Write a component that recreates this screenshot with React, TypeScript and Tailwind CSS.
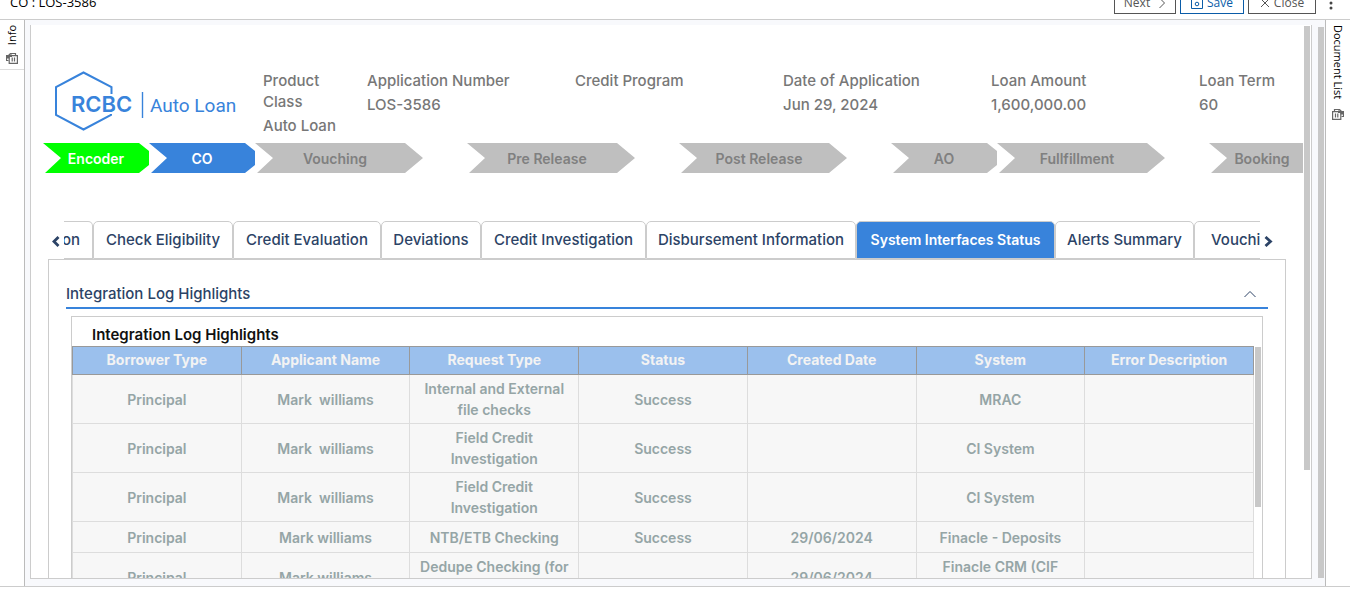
import React from "react";

const facts = [
  { label: "Product Class", value: "Auto Loan", width: "w-[104px] pr-6" },
  { label: "Application Number", value: "LOS-3586", width: "w-52" },
  { label: "Credit Program", value: "", width: "w-52" },
  { label: "Date of Application", value: "Jun 29, 2024", width: "w-52" },
  { label: "Loan Amount", value: "1,600,000.00", width: "w-52" },
  { label: "Loan Term", value: "60", width: "w-52" },
];

const stages = [
  { name: "Encoder", wide: false, tone: "bg-[#00ff00] text-white" },
  { name: "CO", wide: false, tone: "bg-[#3883db] text-white" },
  { name: "Vouching", wide: true, tone: "bg-[#bfbfbf] text-[#808080]" },
  { name: "Pre Release", wide: true, tone: "bg-[#bfbfbf] text-[#808080]" },
  { name: "Post Release", wide: true, tone: "bg-[#bfbfbf] text-[#808080]" },
  { name: "AO", wide: false, tone: "bg-[#bfbfbf] text-[#808080]" },
  { name: "Fullfillment", wide: true, tone: "bg-[#bfbfbf] text-[#808080]" },
  { name: "Booking", wide: false, tone: "bg-[#bfbfbf] text-[#808080]" },
];

const tabs = [
  { name: "on", width: "w-[29px] justify-end pr-3 rounded-tl-none border-l-0" },
  { name: "Check Eligibility", width: "w-[140px] justify-center" },
  { name: "Credit Evaluation", width: "w-[148px] justify-center" },
  { name: "Deviations", width: "w-[100px] justify-center" },
  { name: "Credit Investigation", width: "w-[165px] justify-center" },
  { name: "Disbursement Information", width: "w-[210px] justify-center" },
  { name: "System Interfaces Status", width: "w-[199px] justify-center", active: true },
  { name: "Alerts Summary", width: "w-[139px] justify-center" },
  { name: "Vouching", width: "w-[104px] justify-start pl-4" },
];

const columns = ["Borrower Type", "Applicant Name", "Request Type", "Status", "Created Date", "System", "Error Description"];

const rows = [
  ["Principal", "Mark  williams", "Internal and External file checks", "Success", "", "MRAC", ""],
  ["Principal", "Mark  williams", "Field Credit Investigation", "Success", "", "CI System", ""],
  ["Principal", "Mark  williams", "Field Credit Investigation", "Success", "", "CI System", ""],
  ["Principal", "Mark williams", "NTB/ETB Checking", "Success", "29/06/2024", "Finacle - Deposits", ""],
  ["Principal", "Mark williams", "Dedupe Checking (for Individual)", "", "29/06/2024", "Finacle CRM (CIF Inquiry)", ""],
];

function CardsIcon({ className = "" }: { className?: string }) {
  return (
    <svg className={className} width="12" height="11" viewBox="0 0 12 11" fill="none" stroke="#666" strokeWidth="1.2" aria-hidden="true">
      <path d="M2.5 2.5v-2h5l2 2h2v5H9.5" />
      <path d="M.6 2.6h8.2v7.8H.6z" />
      <path d="M3.5 4.5v4M5.8 4.5v4" />
      <path d="M6 1.5h2V3h3v2.5H8.5V4H6z" fill="#666" stroke="none" />
    </svg>
  );
}

function Logo() {
  return (
    <svg className="block" width="186" height="61" viewBox="0 0 186 61" role="img" aria-label="RCBC Auto Loan">
      <path d="M56.5 24V17L28.5 2.5 1 17v28l27.5 14.5L56 45v-1" fill="none" stroke="#3883db" strokeWidth="2" />
      <text x="16" y="42" fill="#3883db" className="font-['Inter',sans-serif] text-[22px] font-semibold">RCBC</text>
      <path d="M87.5 22v26" stroke="#3883db" strokeWidth="1.4" />
      <text x="95" y="42" fill="#3883db" className="font-['Roboto',sans-serif] text-[19px] font-normal">Auto Loan</text>
    </svg>
  );
}

const headerButton = "flex h-8 items-center justify-center gap-1 border bg-white text-[12px] leading-4";

export default function App() {
  return (
    <div className="flex h-screen flex-col overflow-hidden bg-white pb-[15px] font-['Inter',sans-serif] text-[14px]">
      <header className="flex h-5 shrink-0 items-end overflow-hidden border-b border-[#ccc] pb-[5px] pl-[10px] pr-[17px] font-['Open_Sans',sans-serif]">
        <h1 className="flex-1 pb-[5px] text-[13px] leading-[14px] text-black">CO : LOS-3586</h1>
        <div className="flex items-end gap-1">
          <button className={headerButton + " w-[62px] border-[#555] pb-0.5 pt-3 text-[#555]"}>
            Next
            <svg className="ml-1" width="8" height="12" viewBox="0 0 8 12" fill="none" stroke="currentColor"><path d="M1.5 1l5 5-5 5" /></svg>
          </button>
          <button className={headerButton + " w-16 border-[#0a5ca8] pb-0.5 pt-3 text-[#0a5ca8]"}>
            <svg width="12" height="12" viewBox="0 0 12 12" fill="none" stroke="currentColor"><path d="M.5.5h11v11H.5zM3 2.5h6" /><circle cx="6" cy="7" r="1.8" /></svg>
            Save
          </button>
          <button className={headerButton + " w-[68px] border-[#555] pb-0.5 pt-3 text-[#555]"}>
            <svg width="10" height="10" viewBox="0 0 10 10" fill="none" stroke="currentColor"><path d="M1 1l8 8M9 1L1 9" /></svg>
            Close
          </button>
          <button aria-label="More" className="flex h-8 w-[13px] items-end justify-end pb-1">
            <svg width="4" height="14" viewBox="0 0 4 14" fill="#444"><circle cx="2" cy="2" r="1.5" /><circle cx="2" cy="7" r="1.5" /><circle cx="2" cy="12" r="1.5" /></svg>
          </button>
        </div>
      </header>

      <div className="flex min-h-0 flex-1 border-b border-[#ccc]">
        <aside className="w-[25px] shrink-0 border-r border-[#bbb] font-['Open_Sans',sans-serif] text-[11px] leading-4 text-black">
          <button className="flex h-[50px] w-full flex-col items-center gap-2 border-b border-[#ddd] pt-[5px]">
            <span className="rotate-180 [writing-mode:vertical-rl]">Info</span>
            <CardsIcon className="-scale-x-100" />
          </button>
        </aside>

        <main className="flex min-w-0 flex-1 bg-[#f8f9fc] pb-[7px] pl-[5px] pt-[5px]">
          <div className="flex min-w-0 flex-1 overflow-hidden border-x border-b border-[#ccc] bg-white">
            <div className="min-w-0 flex-1 overflow-hidden">
              <div className="flex w-max pl-6 pt-[45px] text-[15px] font-medium text-[#777]">
                <div className="w-[208px]"><Logo /></div>
                <dl className="flex">
                  {facts.map((f) => (
                    <div key={f.label} className={f.width}>
                      <dt className="leading-[21px]">{f.label}</dt>
                      <dd className="mt-[3px] whitespace-nowrap leading-[21px]">
                        <span>{f.value}</span>
                      </dd>
                    </div>
                  ))}
                </dl>
              </div>

              <ol className="mt-[7px] flex w-max pl-3 font-semibold">
                {stages.map((s) => (
                  <li key={s.name} className={s.wide ? "w-[212px]" : "w-[106px]"}>
                    <div
                      className={
                        (s.wide
                          ? "w-[168px] pr-2 [clip-path:polygon(0_0,150px_0,100%_50%,150px_100%,2px_100%,18px_50%)] "
                          : s.name === "Booking"
                            ? "w-[106px] [clip-path:polygon(0_0,100%_0,100%_100%,2px_100%,18px_50%)] "
                            : "w-[106px] [clip-path:polygon(0_0,96px_0,100%_8px,100%_22px,96px_100%,2px_100%,18px_50%)] ") +
                        "flex h-[30px] items-center justify-center " +
                        s.tone
                      }
                    >
                      {s.name}
                    </div>
                  </li>
                ))}
              </ol>

              <div className="mr-[17px] mt-12 pl-[17px]">
                <div className="flex items-end">
                  <button aria-label="Previous tabs" className="flex h-[38px] w-4 items-center justify-center pr-px pt-[3px]">
                    <svg width="8" height="11" viewBox="0 0 8 11" fill="none" stroke="#2c4366" strokeWidth="2.8"><path d="M6.5 1l-4.5 4.5 4.5 4.5" /></svg>
                  </button>
                  <div role="tablist" className="flex min-w-0 flex-1 overflow-hidden">
                    {tabs.map((t) => (
                      <button
                        key={t.name}
                        role="tab"
                        aria-selected={!!t.active}
                        className={
                          "flex h-[38px] shrink-0 items-center whitespace-nowrap rounded-t-[5px] border border-[#ccc] " +
                          t.width +
                          (t.active ? " bg-[#3883db] pb-0.5 text-[14px] font-semibold text-white" : " bg-white text-[15px] font-medium text-[#2c4366]")
                        }
                      >
                        {t.name}
                      </button>
                    ))}
                  </div>
                  <button aria-label="Next tabs" className="flex h-[38px] w-[26px] items-center pl-1 pt-[3px]">
                    <svg width="10" height="11" viewBox="0 0 10 11" fill="none" stroke="#2c4366" strokeWidth="2.8"><path d="M1.5 1l5 4.5-5 4.5" /></svg>
                  </button>
                </div>

                <section className="border border-[#ccc] pb-16 pl-[17px] pr-[17px]">
                  <h2 className="flex h-[49px] items-center justify-between border-b-2 border-[#3883db] pr-3 pt-[21px] text-[15px] font-medium text-[#2c4366]">
                    Integration Log Highlights
                    <button aria-label="Collapse">
                      <svg width="12" height="8" viewBox="0 0 12 8" fill="none" stroke="#2c4366"><path d="M.5 7L6 1.5 11.5 7" /></svg>
                    </button>
                  </h2>
                  <div className="ml-[5px] mr-[5px] mt-[7px] border border-[#ccc]">
                    <h3 className="pb-px pl-5 pt-2 text-[15px] font-semibold leading-5 text-[#111]">Integration Log Highlights</h3>
                    <div className="flex">
                      <div className="min-w-0 flex-1">
                        <table className="w-full table-fixed border-collapse text-center font-semibold">
                          <thead>
                            <tr className="h-7 bg-[#9bc0ed] text-[#f3f3f3]">
                              {columns.map((c) => (
                                <th key={c} className="border border-[#999] p-0 pb-0.5 leading-[21px]">{c}</th>
                              ))}
                            </tr>
                          </thead>
                          <tbody>
                            {rows.map((r, i) => (
                              <tr key={i} className="h-[31px] bg-[#f7f7f7] text-[#95a5a6]">
                                {r.map((c, j) => (
                                  <td key={j} className="whitespace-pre-wrap border border-[#ddd] px-1 py-[3px] leading-[21px]">{c}</td>
                                ))}
                              </tr>
                            ))}
                          </tbody>
                        </table>
                      </div>
                      <div className="ml-px mr-px mt-px h-40 w-1.5 bg-[#c8c8c8]" />
                    </div>
                  </div>
                </section>
              </div>
            </div>
            <div className="ml-px mr-px mt-px h-[444px] w-1.5 shrink-0 bg-[#c8c8c8]" />
          </div>
          <div className="mb-px ml-1.5 mr-px mt-0.5 w-1.5 shrink-0 bg-[#c8c8c8]" />
        </main>

        <aside className="w-[25px] shrink-0 border-l border-[#bbb] font-['Open_Sans',sans-serif] text-[11px] leading-4 text-black">
          <button className="flex w-full flex-col items-center gap-2.5 pr-px pt-[5px]">
            <span className="[writing-mode:vertical-rl]">Document List</span>
            <CardsIcon />
          </button>
        </aside>
      </div>
    </div>
  );
}
